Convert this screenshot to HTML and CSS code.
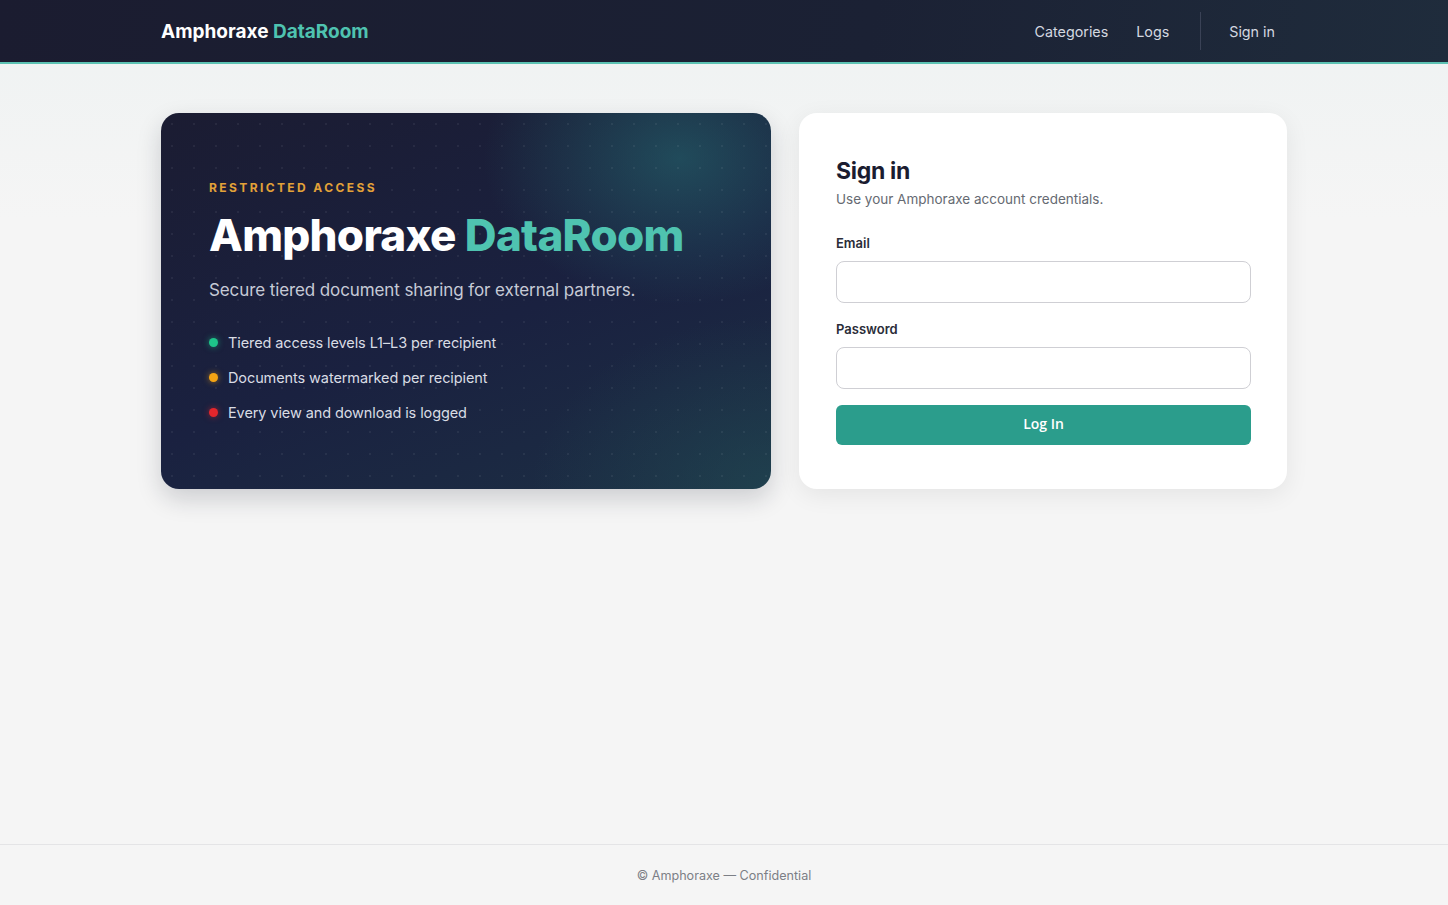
FILE: index.html
```html
<!DOCTYPE html>
<html lang="en">
<head>
  <meta charset="UTF-8" />
  <meta name="viewport" content="width=device-width, initial-scale=1.0"/>
  <title>Sign in - Amphoraxe DataRoom</title>
  <link rel="stylesheet" href="styles.css">
</head>
<body>

  <nav class="topbar">
    <div class="topbar-inner">
      <a href="#" class="brand">Amphoraxe <span class="accent">DataRoom</span></a>
      <div class="nav-links">
        <a href="#">Categories</a>
        <a href="#">Logs</a>
        <span class="nav-sep"></span>
        <a href="#">Sign in</a>
      </div>
    </div>
  </nav>

  <main class="page">
    <section class="hero-card">
      <div class="eyebrow">Restricted Access</div>
      <h1 class="hero-title">Amphoraxe <span class="accent">DataRoom</span></h1>
      <p class="hero-sub">Secure tiered document sharing for external partners.</p>
      <ul class="features">
        <li><span class="dot green"></span>Tiered access levels L1–L3 per recipient</li>
        <li><span class="dot amber"></span>Documents watermarked per recipient</li>
        <li><span class="dot red"></span>Every view and download is logged</li>
      </ul>
    </section>

    <section class="login-card">
      <h2>Sign in</h2>
      <p class="login-sub">Use your Amphoraxe account credentials.</p>
      <form>
        <label for="email">Email</label>
        <input type="email" id="email">
        <label for="password">Password</label>
        <input type="password" id="password">
        <button type="button" class="login-btn">Log In</button>
      </form>
    </section>
  </main>

  <footer class="footer">© Amphoraxe — Confidential</footer>

</body>
</html>
```

FILE: styles.css
```css
* {
  box-sizing: border-box;
}
html, body {
  height: 100%;
}
body {
  margin: 0;
  font-family: 'Inter', 'Noto Sans', sans-serif;
  background: linear-gradient(180deg, #eef2f2 0%, #f5f5f5 220px);
  color: #1b1c30;
  display: flex;
  flex-direction: column;
}
a {
  text-decoration: none;
}
.accent {
  color: #4fc3b0;
}

/* top bar */
.topbar {
  background: linear-gradient(100deg, #1b1c30 0%, #1b2134 60%, #1f2c3c 100%);
  border-bottom: 2px solid #5cc2b3;
  height: 64px;
}
.topbar-inner {
  max-width: 1126px;
  margin: 0 auto;
  height: 100%;
  display: flex;
  align-items: center;
  justify-content: space-between;
}
.brand {
  color: #fff;
  font-weight: 700;
  font-size: 19px;
  letter-spacing: 0;
}
.nav-links {
  display: flex;
  align-items: center;
  gap: 28px;
  padding-right: 12px;
}
.nav-links a {
  color: #d4d8e0;
  font-size: 14.3px;
}
.nav-sep {
  width: 1px;
  height: 38px;
  background: #3a4256;
  margin: 0 0 0 3px;
}

/* main */
.page {
  flex: 1;
  width: 1126px;
  margin: 0 auto;
  padding-top: 49px;
  display: grid;
  grid-template-columns: 610px 488px;
  gap: 28px;
  align-items: start;
}
.hero-card {
  height: 376px;
  border-radius: 18px;
  padding: 67px 48px 0;
  color: #fff;
  background:
    radial-gradient(circle, rgba(255,255,255,0.06) 1px, transparent 1.5px) 0 0 / 22px 22px,
    radial-gradient(ellipse 280px 210px at 85% 12%, rgba(38, 110, 116, 0.55), transparent 70%),
    radial-gradient(ellipse 320px 230px at 100% 100%, rgba(34, 78, 86, 0.55), transparent 75%),
    linear-gradient(160deg, #1b1c32 0%, #1a2140 55%, #1c2f44 100%);
  box-shadow: 0 10px 24px rgba(20, 25, 45, 0.18);
}
.eyebrow {
  color: #e3a238;
  font-size: 12px;
  font-weight: 700;
  letter-spacing: 2.4px;
  text-transform: uppercase;
}
.hero-title {
  margin: 14px 0 0;
  font-size: 44px;
  font-weight: 800;
  letter-spacing: -0.7px;
  line-height: 1.2;
}
.hero-sub {
  margin: 18px 0 0;
  font-size: 17px;
  color: #c6cad6;
  letter-spacing: -0.1px;
}
.features {
  list-style: none;
  padding: 0;
  margin: 25px 0 0;
}
.features li {
  display: flex;
  align-items: center;
  font-size: 14.5px;
  color: #d9dce4;
  height: 35px;
  letter-spacing: -0.1px;
}
.dot {
  width: 9px;
  height: 9px;
  border-radius: 50%;
  margin: 0 10px 0 0;
}
.dot.green { background: #1ec48a; box-shadow: 0 0 6px rgba(30,196,138,0.6); }
.dot.amber { background: #f4a414; box-shadow: 0 0 6px rgba(244,164,20,0.6); }
.dot.red { background: #e4262c; box-shadow: 0 0 6px rgba(228,38,44,0.6); }

/* login card */
.login-card {
  height: 376px;
  background: #fff;
  border-radius: 18px;
  padding: 44px 36px 0 37px;
  box-shadow: 0 6px 24px rgba(0, 0, 0, 0.07);
}
.login-card h2 {
  margin: 0;
  font-size: 23px;
  font-weight: 700;
  letter-spacing: -0.3px;
}
.login-sub {
  margin: 6px 0 0;
  font-size: 13.5px;
  color: #666a72;
}
.login-card form {
  margin-top: 28px;
  display: flex;
  flex-direction: column;
}
.login-card label {
  font-size: 13px;
  font-weight: 600;
  color: #2a2c38;
  margin-bottom: 10px;
}
.login-card input {
  height: 42px;
  border: 1px solid #cfcfd4;
  border-radius: 8px;
  margin-bottom: 18px;
  font-size: 15px;
  padding: 0 12px;
}
.login-btn {
  margin-top: -2px;
  height: 40px;
  border: none;
  border-radius: 6px;
  background: #2b9d8c;
  color: #fff;
  font-family: 'Open Sans', sans-serif;
  font-weight: 600;
  font-size: 14px;
  line-height: 36px;
  padding-bottom: 4px;
  cursor: pointer;
}

/* footer */
.footer {
  border-top: 1px solid #e4e4e6;
  height: 61px;
  display: flex;
  align-items: center;
  justify-content: center;
  font-size: 12.6px;
  color: #7c7f86;
  background: #f5f5f5;
}
```
